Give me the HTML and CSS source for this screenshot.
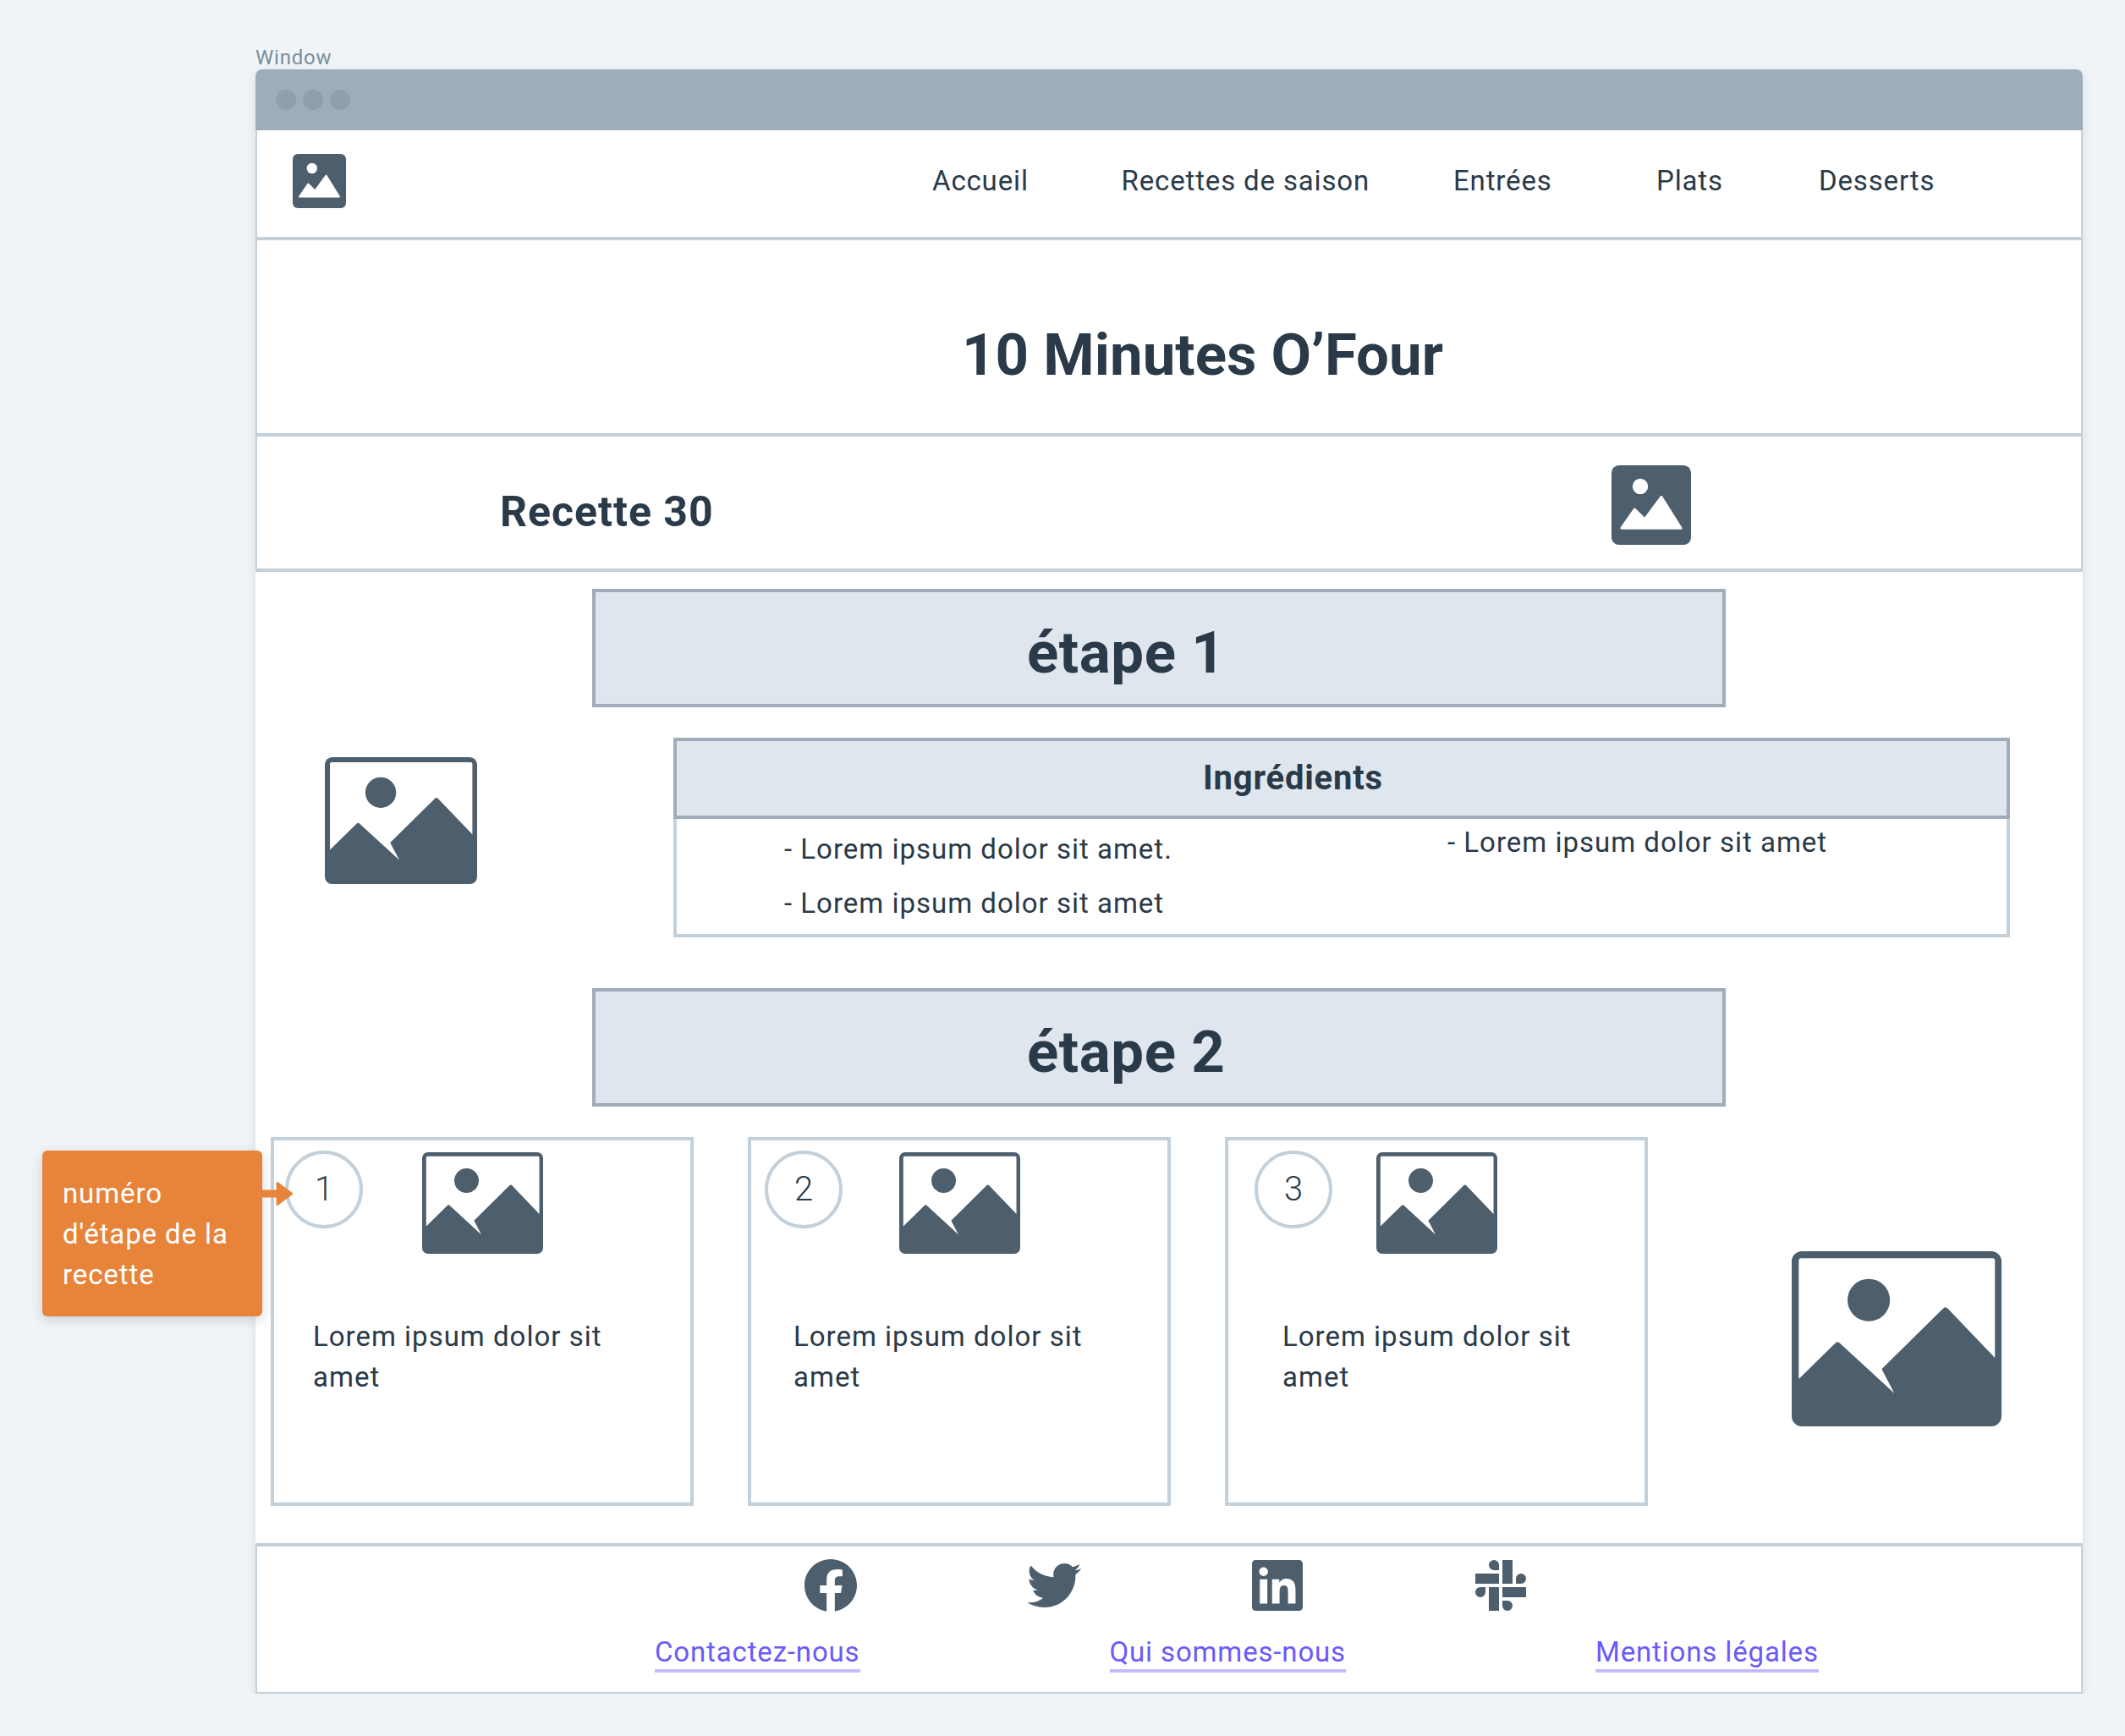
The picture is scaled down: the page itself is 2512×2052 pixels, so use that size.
FILE: index.html
```html
<!DOCTYPE html>
<html lang="fr">
<head>
  <meta charset="UTF-8" />
  <title>10 Minutes O'Four</title>
  <link rel="stylesheet" href="styles.css">
</head>
<body>
  <svg class="defs" width="0" height="0">
    <symbol id="photo-solid" viewBox="0 0 63 64" preserveAspectRatio="none">
      <rect width="63" height="64" rx="6" fill="#4d5e6c" />
      <ellipse cx="22.8" cy="17" rx="6.2" ry="6.2" fill="#fff" />
      <path d="M8 50.5 18.3 35.5 26.3 43.5 39.5 25.5 55 50.5Z" fill="#fff" stroke="#fff" stroke-width="2" stroke-linejoin="round" />
    </symbol>
    <symbol id="photo-outline" viewBox="0 0 247 207" preserveAspectRatio="none">
      <rect width="247" height="207" rx="12" fill="#4d5e6c" />
      <path d="M8.3 11Q8.3 8.3 11 8.3H236.6Q239.3 8.3 239.3 11V126L184 68Q181 64.5 178 68L106 139.3 120.7 167.7 57 109Q54 105.5 51 109L8.3 151Z" fill="#fff" />
      <circle cx="90.7" cy="57.7" r="25" fill="#4d5e6c" />
    </symbol>
  </svg>

  <p class="frame-label">Window</p>

  <div class="window">
    <div class="titlebar">
      <span class="dot"></span>
      <span class="dot"></span>
      <span class="dot"></span>
    </div>

    <header class="nav">
      <svg class="logo"><use href="#photo-solid" /></svg>
      <nav class="nav-links">
        <a>Accueil</a>
        <a>Recettes de saison</a>
        <a>Entrées</a>
        <a>Plats</a>
        <a>Desserts</a>
      </nav>
    </header>

    <section class="hero">
      <h1>10 Minutes O’Four</h1>
    </section>

    <section class="recipe">
      <h2>Recette 30</h2>
      <svg class="recipe-pic"><use href="#photo-solid" /></svg>
    </section>

    <main class="content">
      <div class="step-title step-first">étape 1</div>

      <div class="ingredients-row">
        <svg class="side-pic"><use href="#photo-outline" /></svg>
        <div class="ingredients">
          <div class="ingredients-head">Ingrédients</div>
          <div class="ingredients-body">
            <ul class="list-left">
              <li>- Lorem ipsum dolor sit amet.</li>
              <li>- Lorem ipsum dolor sit amet</li>
            </ul>
            <ul class="list-right">
              <li>- Lorem ipsum dolor sit amet</li>
            </ul>
          </div>
        </div>
      </div>

      <div class="step-title step-second">étape 2</div>

      <div class="cards-row">
        <article class="card card-a">
          <div class="card-top">
            <span class="num">1</span>
            <svg class="card-pic"><use href="#photo-outline" /></svg>
          </div>
          <p>Lorem ipsum dolor sit amet</p>
        </article>
        <article class="card card-b">
          <div class="card-top">
            <span class="num">2</span>
            <svg class="card-pic"><use href="#photo-outline" /></svg>
          </div>
          <p>Lorem ipsum dolor sit amet</p>
        </article>
        <article class="card card-c">
          <div class="card-top">
            <span class="num">3</span>
            <svg class="card-pic"><use href="#photo-outline" /></svg>
          </div>
          <p>Lorem ipsum dolor sit amet</p>
        </article>
        <svg class="big-pic"><use href="#photo-outline" /></svg>
      </div>
    </main>

    <footer class="footer">
      <div class="socials">
        <svg class="social" viewBox="0 0 512 512"><path d="M504 256C504 119 393 8 256 8S8 119 8 256c0 123.78 90.69 226.38 209.25 245V327.69h-63V256h63v-54.64c0-62.15 37-96.48 93.67-96.48 27.14 0 55.52 4.84 55.52 4.84v61h-31.28c-30.8 0-40.41 19.12-40.41 38.73V256h68.78l-11 71.69h-57.78V501C413.31 482.38 504 379.78 504 256z" /></svg>
        <svg class="social" viewBox="0 0 512 512"><path d="M459.37 151.716c.325 4.548.325 9.097.325 13.645 0 138.72-105.583 298.558-298.558 298.558-59.452 0-114.68-17.219-161.137-47.106 8.447.974 16.568 1.299 25.34 1.299 49.055 0 94.213-16.568 130.274-44.832-46.132-.975-84.792-31.188-98.112-72.772 6.498.974 12.995 1.624 19.818 1.624 9.421 0 18.843-1.3 27.614-3.573-48.081-9.747-84.143-51.98-84.143-102.985v-1.299c13.969 7.797 30.214 12.67 47.431 13.319-28.264-18.843-46.781-51.005-46.781-87.391 0-19.492 5.197-37.36 14.294-52.954 51.655 63.675 129.3 105.258 216.365 109.807-1.624-7.797-2.599-15.918-2.599-24.04 0-57.828 46.782-104.934 104.934-104.934 30.213 0 57.502 12.67 76.67 33.137 23.715-4.548 46.456-13.32 66.599-25.34-7.798 24.366-24.366 44.833-46.132 57.827 21.117-2.273 41.584-8.122 60.426-16.243-14.292 20.791-32.161 39.308-52.628 54.253z" /></svg>
        <svg class="social social-small" viewBox="0 32 448 448"><path d="M416 32H31.9C14.3 32 0 46.5 0 64.3v383.4C0 465.5 14.3 480 31.9 480H416c17.6 0 32-14.5 32-32.3V64.3c0-17.8-14.4-32.3-32-32.3zM135.4 416H69V202.2h66.5V416zm-33.2-243c-21.3 0-38.5-17.3-38.5-38.5S80.9 96 102.2 96c21.2 0 38.5 17.3 38.5 38.5 0 21.3-17.2 38.5-38.5 38.5zm282.1 243h-66.4V312c0-24.8-.5-56.7-34.5-56.7-34.6 0-39.9 27-39.9 54.9V416h-66.4V202.2h63.7v29.2h.9c8.9-16.8 30.6-34.5 62.9-34.5 67.2 0 79.7 44.3 79.7 101.9V416z" /></svg>
        <svg class="social social-small" viewBox="0 0 60 60"><path d="M32 0H44V28H32ZM0 16H28V28H0ZM32 32H60V44H32ZM16 32H28V60H16ZM28 12H22A6 6 0 1 1 28 6ZM48 28V22A6 6 0 1 1 54 28ZM12 32V38A6 6 0 1 1 6 32ZM32 48H38A6 6 0 1 1 32 54Z" /></svg>
      </div>
      <div class="footer-links">
        <a>Contactez-nous</a>
        <a>Qui sommes-nous</a>
        <a>Mentions légales</a>
      </div>
    </footer>
  </div>

  <div class="callout">
    numéro d'étape de la recette
    <svg class="callout-arrow" viewBox="0 0 38 30"><path d="M0 10.5H17V2Q17 0 19 1L36 13.5Q38 15 36 16.500L19 29Q17 30 17 28V19.500H0Z" /></svg>
  </div>
</body>
</html>
```

FILE: styles.css
```css
body {
  margin: 0;
  padding-left: 302px;
  background-color: #f0f4f7;
  font-family: Roboto, "Liberation Sans", sans-serif;
  color: #2a3a48;
  position: relative;
}
.defs {
  position: absolute;
}
.frame-label {
  margin: 0;
  height: 82px;
  box-sizing: border-box;
  padding-top: 54px;
  font-size: 24px;
  line-height: 28px;
  letter-spacing: 0.8px;
  color: #7b8d9c;
}
.window {
  width: 2160px;
  height: 1920px;
  background-color: #fff;
  border-radius: 8px 8px 0 0;
  box-shadow: 0 4px 12px rgba(60, 80, 100, 0.14);
}
.titlebar {
  height: 72px;
  box-sizing: border-box;
  padding: 24px 24px;
  display: flex;
  gap: 8px;
  background-color: #9facb9;
  border-radius: 8px 8px 0 0;
}
.dot {
  width: 24px;
  height: 24px;
  border-radius: 50%;
  background-color: #8f9fae;
}
.nav,
.hero,
.recipe,
.footer {
  box-sizing: border-box;
  border-left: 2px solid #c3d0da;
  border-right: 2px solid #c3d0da;
  border-bottom: 4px solid #c3d0da;
}
.nav {
  height: 130px;
  display: flex;
  padding: 28px 0 0 42px;
}
.logo {
  width: 63px;
  height: 64px;
}
.nav-links {
  margin-left: 693px;
  display: grid;
  grid-template-columns: 223.5px 392.5px 240px 192px auto;
  font-size: 33px;
  line-height: 40px;
  letter-spacing: 0.85px;
  padding-top: 12px;
}
.hero {
  height: 232px;
  padding: 0 0 0 833px;
}
.hero h1 {
  margin: 0;
  padding-top: 96px;
  font-size: 69px;
  line-height: 80px;
  letter-spacing: 0;
  font-weight: 700;
}
.recipe {
  height: 160px;
  display: flex;
  justify-content: space-between;
  padding: 34px 461px 0 287px;
}
.recipe h2 {
  margin: 0;
  padding-top: 25px;
  font-size: 50px;
  line-height: 60px;
  letter-spacing: 1px;
  font-weight: 700;
}
.recipe-pic {
  width: 94px;
  height: 94px;
}
.content {
  height: 1148px;
  display: flex;
  flex-direction: column;
  align-items: flex-start;
}
.step-title {
  width: 1340px;
  height: 140px;
  box-sizing: border-box;
  margin-left: 398px;
  padding: 32px 0 0 510px;
  background-color: #dfe6ee;
  border: 4px solid #9facb9;
  font-size: 69px;
  line-height: 80px;
  letter-spacing: 0.6px;
  font-weight: 700;
}
.step-first {
  margin-top: 20px;
}
.step-second {
  margin-top: 60px;
}
.ingredients-row {
  margin-top: 36px;
  display: flex;
}
.side-pic {
  margin: 23px 0 0 82px;
  width: 180px;
  height: 150px;
}
.ingredients {
  margin-left: 232px;
  width: 1580px;
  height: 236px;
  box-sizing: border-box;
  border: 4px solid #c3d0da;
  border-top: none;
}
.ingredients-head {
  margin: 0 -4px;
  height: 96px;
  box-sizing: border-box;
  padding: 20px 115px 0 0;
  background-color: #dfe6ee;
  border: 4px solid #9facb9;
  text-align: center;
  font-size: 40px;
  line-height: 48px;
  letter-spacing: 0.8px;
  font-weight: 700;
}
.ingredients-body {
  display: flex;
  font-size: 33px;
  line-height: 64px;
  letter-spacing: 1px;
}
.ingredients-body ul {
  margin: 0;
  padding: 0;
  list-style: none;
}
.ingredients-body .list-left {
  width: 911px;
  box-sizing: border-box;
  padding: 4px 0 0 127px;
}
.ingredients-body .list-right {
  margin-top: -4px;
}
.cards-row {
  margin-top: 36px;
  padding-left: 18px;
  display: flex;
  gap: 64px;
}
.card {
  width: 500px;
  height: 436px;
  box-sizing: border-box;
  border: 4px solid #c3d0da;
}
.card-top {
  display: grid;
  grid-template-columns: 1fr 143px 1fr;
  padding-top: 12px;
}
.num {
  grid-column: 1;
  grid-row: 1;
  width: 92px;
  height: 92px;
  box-sizing: border-box;
  border: 4px solid #c3d0da;
  border-radius: 50%;
  text-align: center;
  font-size: 40px;
  font-weight: 300;
  line-height: 84px;
}
.card-pic {
  grid-column: 2;
  grid-row: 1;
  margin-top: 2px;
  width: 143px;
  height: 120px;
}
.card-a .num { margin-left: 13px; }
.card-b .num { margin-left: 16px; }
.card-c .num { margin-left: 31px; }
.card p {
  margin: 0;
  padding-top: 74px;
  width: 380px;
  font-size: 33px;
  line-height: 48px;
  letter-spacing: 1px;
}
.card-a p { margin-left: 46px; }
.card-b p { margin-left: 50px; }
.card-c p { margin-left: 64px; }
.big-pic {
  margin: 135px 0 0 106px;
  width: 248px;
  height: 207px;
}
.footer {
  height: 178px;
  border-top: 4px solid #c3d0da;
  border-bottom: 2px solid #c3d0da;
  padding: 14px 0 0 646px;
}
.socials {
  display: flex;
  gap: 200px;
}
.social {
  width: 64px;
  height: 64px;
  fill: #4d5e6c;
}
.social-small {
  width: 60px;
  height: 60px;
  margin: 2px;
}
.footer-links {
  margin: 27px 0 0 -176px;
  display: flex;
  gap: 295px;
  font-size: 33px;
  line-height: 40px;
  letter-spacing: 0.85px;
  color: #6a5af9;
}
.footer-links a {
  border-bottom: 4px solid #c4bdf9;
}
.callout {
  position: absolute;
  left: 50px;
  top: 1360px;
  width: 260px;
  height: 196px;
  box-sizing: border-box;
  padding: 27px 20px 0 24px;
  background-color: #e8833a;
  border-radius: 6px;
  box-shadow: 0 4px 14px rgba(60, 80, 100, 0.22);
  color: #fff;
  font-size: 33px;
  line-height: 48px;
  letter-spacing: 0.9px;
}
.callout-arrow {
  position: absolute;
  left: 260px;
  top: 36px;
  width: 37px;
  height: 30px;
  fill: #e8833a;
}
```
